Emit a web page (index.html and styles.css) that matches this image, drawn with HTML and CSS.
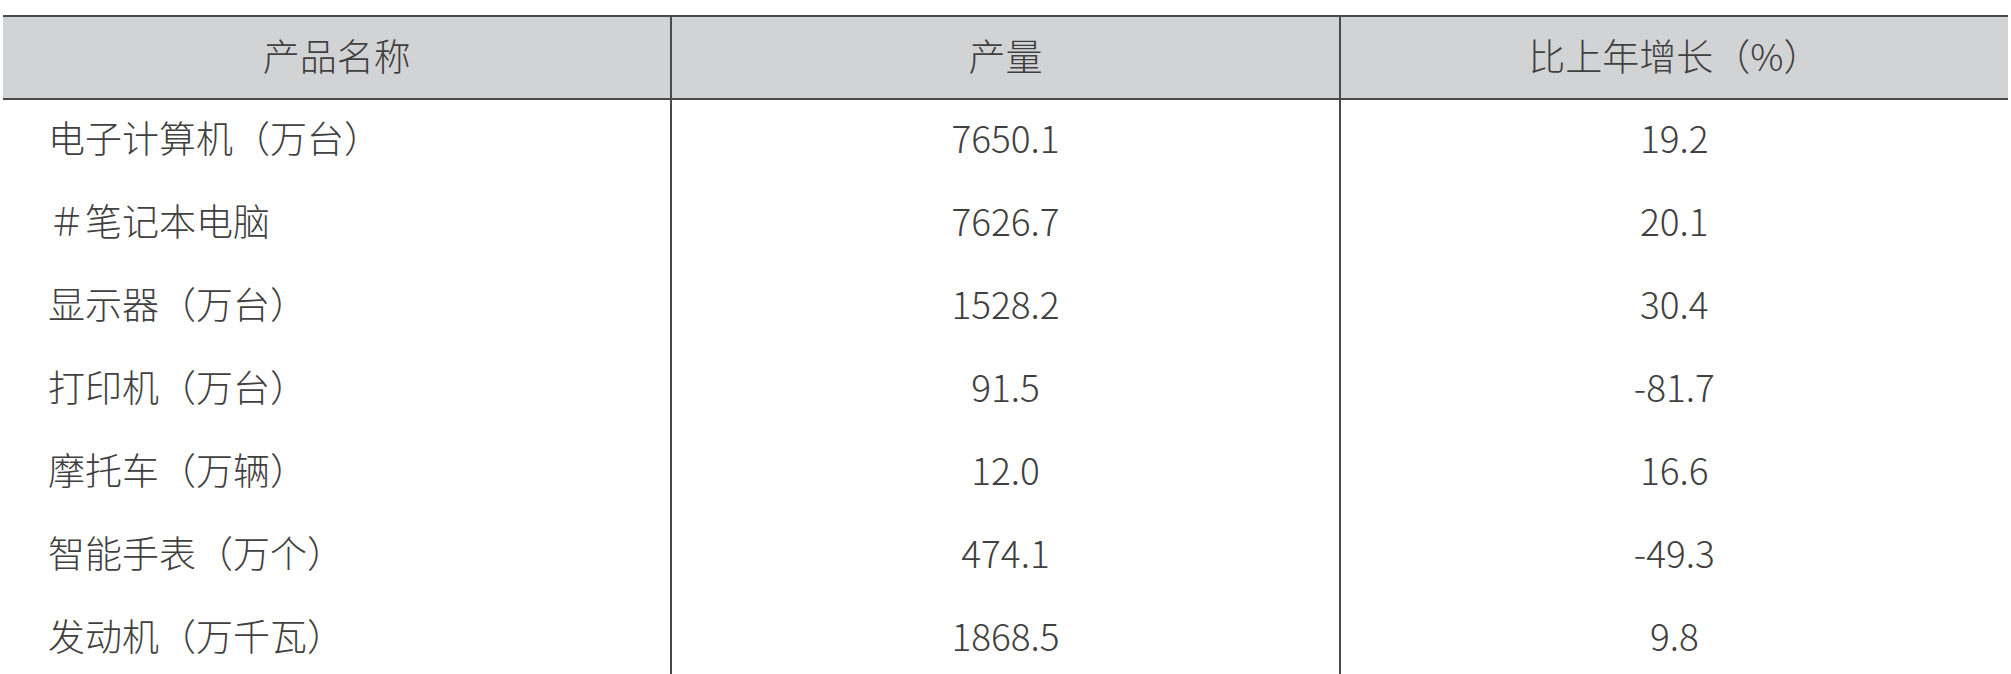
FILE: index.html
```html
<!DOCTYPE html>
<html lang="zh-CN">
<head>
<meta charset="utf-8">
<title>主要工业产品产量</title>
<link rel="stylesheet" href="styles.css">
</head>
<body>
<table class="data">
  <thead>
    <tr><th>产品名称</th><th>产量</th><th>比上年增长（%）</th></tr>
  </thead>
  <tbody>
    <tr><td class="name">电子计算机（万台）</td><td>7650.1</td><td>19.2</td></tr>
    <tr><td class="name">＃笔记本电脑</td><td>7626.7</td><td>20.1</td></tr>
    <tr><td class="name">显示器（万台）</td><td>1528.2</td><td>30.4</td></tr>
    <tr><td class="name">打印机（万台）</td><td>91.5</td><td>-81.7</td></tr>
    <tr><td class="name">摩托车（万辆）</td><td>12.0</td><td>16.6</td></tr>
    <tr><td class="name">智能手表（万个）</td><td>474.1</td><td>-49.3</td></tr>
    <tr><td class="name">发动机（万千瓦）</td><td>1868.5</td><td>9.8</td></tr>
  </tbody>
</table>
</body>
</html>
```
FILE: styles.css
```css
html, body {
  margin: 0;
  background: #ffffff;
}
body {
  padding: 15px 3px 0 3px;
  font-family: "Noto Sans CJK SC", "Noto Sans", sans-serif;
  font-weight: 300;
  color: #404040;
}
.data {
  width: 2005px;
  border-collapse: collapse;
  table-layout: fixed;
}
.data th {
  background: #d2d3d5;
  font-weight: 300;
  font-size: 37px;
  height: 75px;
  padding: 0 0 6px 0;
  text-align: center;
  border-top: 2px solid #4a4a4a;
  border-bottom: 2px solid #4a4a4a;
}
.data th + th {
  border-left: 2px solid #4a4a4a;
}
.data td {
  font-size: 37px;
  height: 74px;
  padding: 0 0 8px 0;
  text-align: center;
  border-bottom: 1px solid #ffffff;
}
.data td + td {
  border-left: 2px solid #4a4a4a;
}
.data td.name {
  text-align: left;
  padding-left: 45px;
}
```
